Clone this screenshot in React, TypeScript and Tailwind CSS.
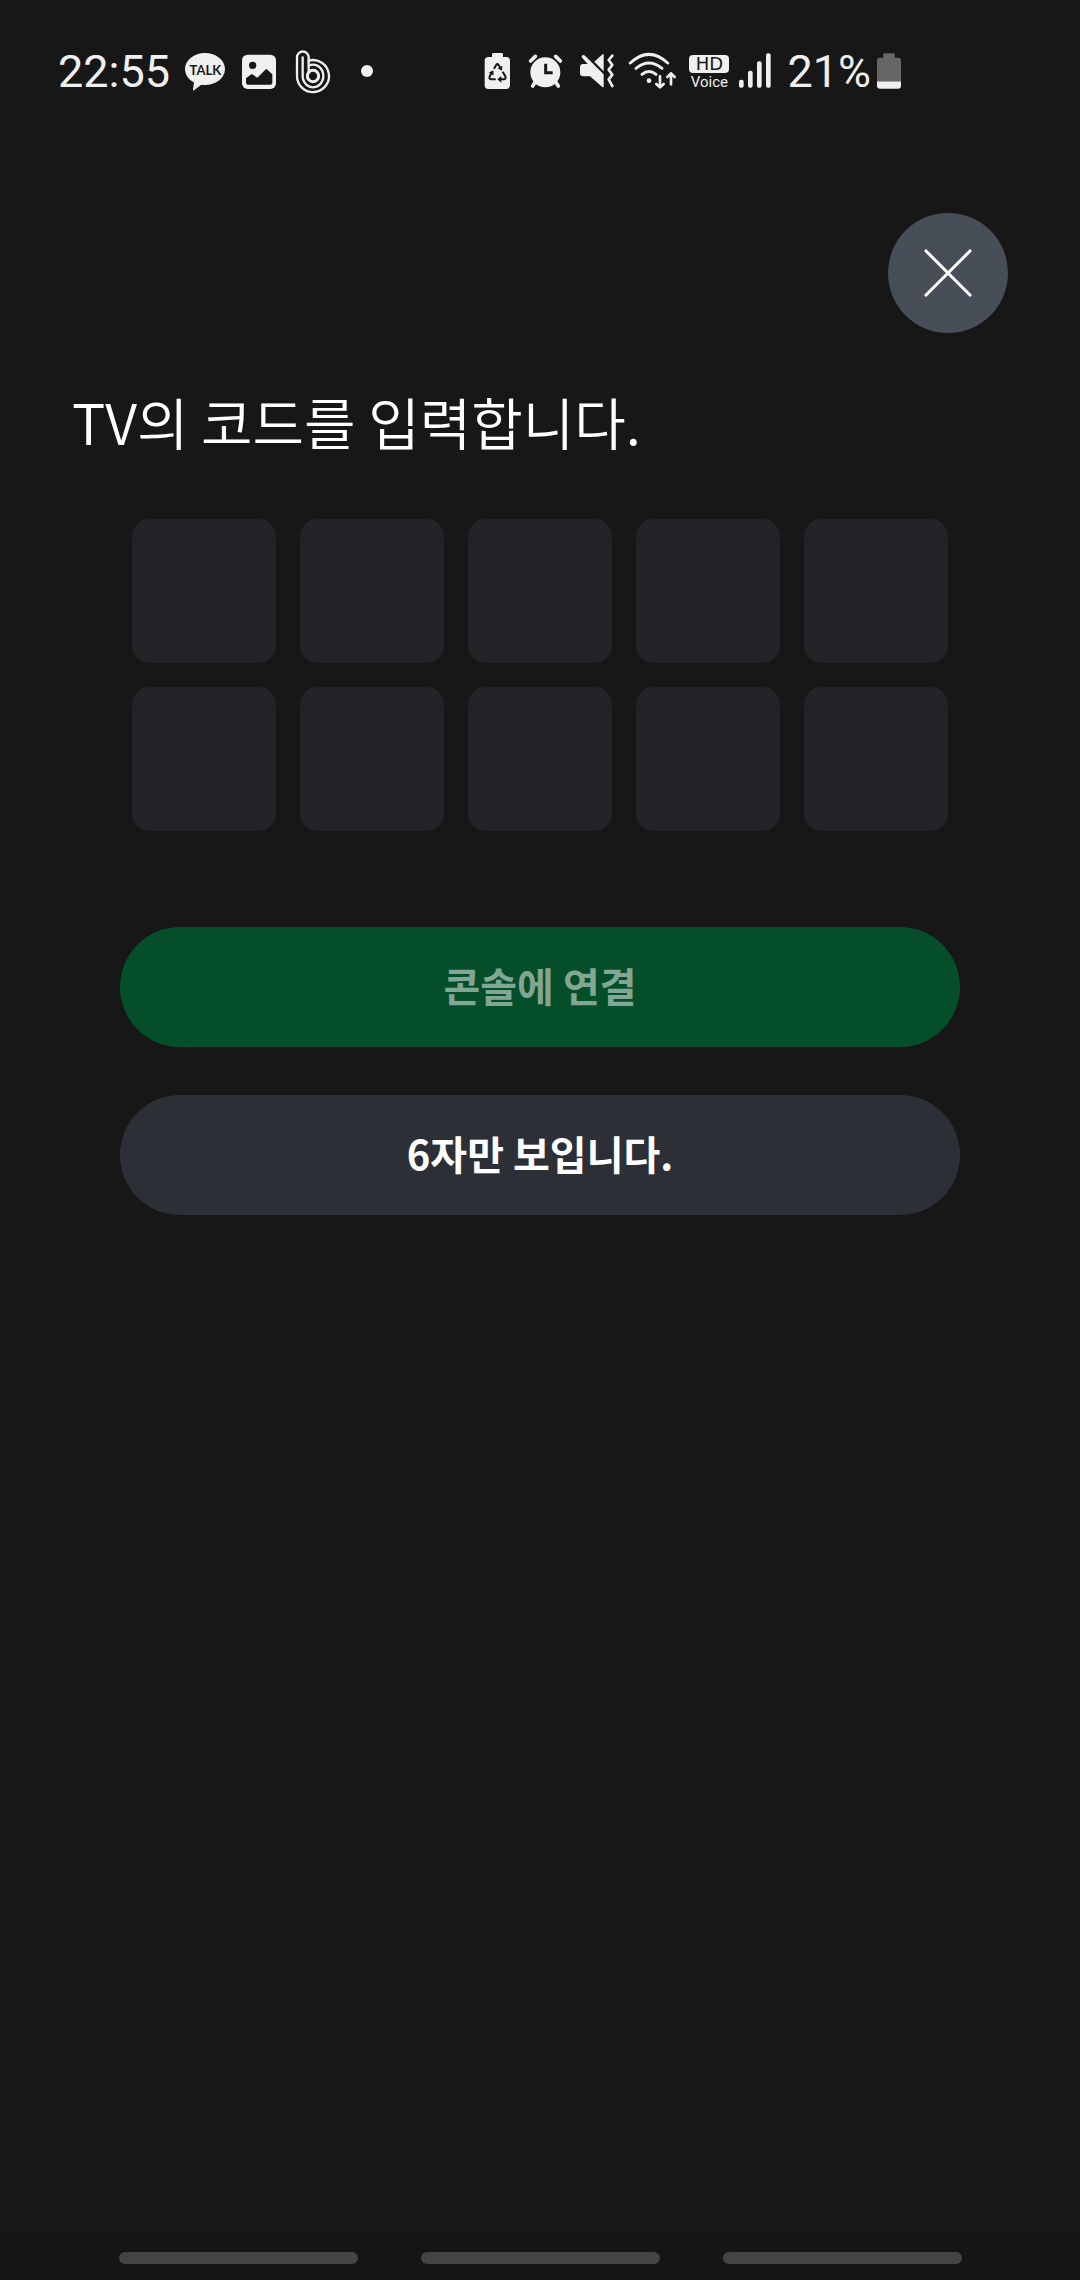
import type { ReactNode } from "react";

const INK = "#f0f0f0";
const BG = "#171717";

function StatusIcon({ box, className, children }: { box: string; className: string; children: ReactNode }) {
  return (
    <svg viewBox={box} className={`h-11 shrink-0 ${className}`} fill={INK} aria-hidden="true">
      {children}
    </svg>
  );
}

function TalkIcon() {
  return (
    <StatusIcon box="432 60 126 132" className="w-[42px]">
      <path d="M495 69c33 0 60 21 60 48s-27 48-60 48c-4 0-8 0-11-1l-22 17c-2 1-4 0-3-2l3-22c-16-8-27-23-27-40 0-27 27-48 60-48z" />
      <text x="496" y="134" textAnchor="middle" fill={BG} className="font-['Lato',sans-serif] text-[39px] font-bold">
        TALK
      </text>
    </StatusIcon>
  );
}

function PictureIcon() {
  return (
    <StatusIcon box="600 60 114 132" className="w-[38px]">
      <rect x="606" y="74" width="102" height="103" rx="17" />
      <circle cx="638" cy="106" r="11" fill={BG} />
      <path d="M618 145l17-13 17 11 27-27 18 17v25q0 6-6 6h-67q-6 0-6-6z" fill={BG} />
    </StatusIcon>
  );
}

function SpiralIcon() {
  return (
    <StatusIcon box="756 60 126 132" className="w-[42px]">
      <g fill="none" stroke={INK} strokeWidth="7">
        <path d="M771 138V82a17 17 0 0 1 35 0V92A48 48 0 1 1 771 138" />
        <path d="M788 82V138A31 34 0 1 0 806 107" strokeLinecap="round" />
        <path d="M806 91V132" />
        <circle cx="819" cy="138" r="17" strokeWidth="9" />
      </g>
    </StatusIcon>
  );
}

function DotIcon() {
  return (
    <StatusIcon box="924 60 114 132" className="w-[38px]">
      <circle cx="981" cy="123" r="18" />
    </StatusIcon>
  );
}

function BatterySaverIcon() {
  return (
    <StatusIcon box="33 60 99 132" className="w-[33px]">
      <path d="M70 69h25q4 0 4 4v8h10q11 0 11 11v74q0 11-11 11H55q-11 0-11-11V92q0-11 11-11h11v-8q0-4 4-4z" />
      <g fill="none" stroke={BG} strokeWidth="6" strokeLinejoin="round">
        <path d="M72 116l7-12q3-4 6 0l8 13" />
        <path d="M98 125l8 14q3 9-5 9H87" />
        <path d="M77 148H64q-8 0-5-9l7-12" />
      </g>
      <path d="M97 107l-1 15-13-7zM94 138v20l-12-10zM56 128l14-7 1 15z" fill={BG} />
    </StatusIcon>
  );
}

function AlarmIcon() {
  return (
    <StatusIcon box="162 60 129 132" className="w-[43px]">
      <circle cx="226" cy="127" r="45" />
      <g stroke={INK} strokeWidth="11" strokeLinecap="round">
        <path d="M182 93l14-14M271 93l-14-14" />
        <path d="M196 156l-8 12M257 156l8 12" />
      </g>
      <path d="M227 101v27h21" fill="none" stroke={BG} strokeWidth="9" />
    </StatusIcon>
  );
}

function VibrateIcon() {
  return (
    <StatusIcon box="321 60 120 132" className="w-10">
      <path d="M401 74v50l-28-29 23-21q5-4 5 0z" />
      <path d="M340 102h13l-16-18q-4-5 0-8t8 1l56 56v36q0 5-5 1l-36-31h-20q-10 0-10-9v-18q0-10 10-10z" />
      <path
        d="M427 77l-11 13 11 15-11 14 11 15-11 14 11 20"
        fill="none"
        stroke={INK}
        strokeWidth="8"
        strokeLinecap="round"
        strokeLinejoin="round"
      />
    </StatusIcon>
  );
}

function WifiIcon() {
  return (
    <StatusIcon box="471 60 156 132" className="w-[52px]">
      <g fill="none" stroke={INK} strokeWidth="9" strokeLinecap="round" strokeLinejoin="round">
        <path d="M481 99q56-52 112 0" />
        <path d="M498 115q39-32 78 0" />
        <path d="M516 133q21-17 42 0" />
        <path d="M570 139v33M559 162l11 10 11-10" strokeWidth="8" />
        <path d="M603 163v-33M592 141l11-11 11 11" strokeWidth="8" />
      </g>
      <circle cx="537" cy="152" r="7" />
    </StatusIcon>
  );
}

function HdVoiceIcon() {
  return (
    <div className="flex w-10 flex-col items-center pt-0.5 text-[#f0f0f0]">
      <span className="flex h-[18px] w-full items-center justify-center rounded-[4px] bg-[#f0f0f0] font-['DejaVu_Sans',sans-serif] text-lg leading-none text-[#171717]">
        HD
      </span>
      <span className="font-['Roboto',sans-serif] text-[15px] leading-[18px]">Voice</span>
    </div>
  );
}

function SignalIcon() {
  return (
    <StatusIcon box="207 60 96 132" className="w-8">
      <rect x="207" y="149" width="14" height="24" rx="6" />
      <rect x="234" y="122" width="14" height="51" rx="6" />
      <rect x="261" y="94" width="14" height="79" rx="6" />
      <rect x="288" y="70" width="14" height="103" rx="6" />
    </StatusIcon>
  );
}

function BatteryIcon() {
  return (
    <StatusIcon box="620 60 73 132" className="w-6">
      <path
        d="M643 69h27q4 0 4 4v10h9q10 0 10 10v63h-73V93q0-10 10-10h9V73q0-4 4-4z"
        fill="#666666"
      />
      <path d="M620 155h73v12q0 10-10 10h-53q-10 0-10-10z" />
    </StatusIcon>
  );
}

function StatusBar() {
  return (
    <header className="flex h-36 items-center justify-between pr-[179px] pl-[58px] text-[#f0f0f0]">
      <div className="flex items-center gap-3.5">
        <time className="pb-0.5 font-['Roboto',sans-serif] text-[45px] leading-none">22:55</time>
        <TalkIcon />
        <PictureIcon />
        <SpiralIcon />
        <DotIcon />
      </div>
      <div className="flex items-center gap-2.5">
        <BatterySaverIcon />
        <AlarmIcon />
        <VibrateIcon />
        <WifiIcon />
        <HdVoiceIcon />
        <SignalIcon />
        <div className="ml-1.5 flex items-center gap-1.5">
          <span className="pb-0.5 font-['Roboto',sans-serif] text-[45px] leading-none">21%</span>
          <BatteryIcon />
        </div>
      </div>
    </header>
  );
}

const CODE_LENGTH = 10;

export default function App() {
  return (
    <div className="flex min-h-screen flex-col bg-[#171717] font-['Noto_Sans_CJK_KR',sans-serif]">
      <StatusBar />
      <main className="flex flex-1 flex-col px-[72px] pt-[69px]">
        <button
          type="button"
          aria-label="닫기"
          className="flex size-[120px] items-center justify-center self-end rounded-full bg-[#484e58]"
        >
          <svg viewBox="0 0 48 48" className="size-12" stroke="#ffffff" strokeWidth="3" aria-hidden="true">
            <path d="M1 1l46 46M47 1L1 47" />
          </svg>
        </button>
        <h1 className="mt-[46px] text-[56px] leading-[84px] font-[350] text-white">TV의 코드를 입력합니다.</h1>
        <form className="mt-14 flex flex-col px-12">
          <div className="grid grid-cols-5 gap-6 px-3">
            {Array.from({ length: CODE_LENGTH }, (_, i) => (
              <input
                key={i}
                type="text"
                maxLength={1}
                aria-label={`코드 ${i + 1}`}
                className="aspect-square w-full rounded-[18px] bg-[#232428] text-center text-[56px] text-white"
              />
            ))}
          </div>
          <button
            type="submit"
            disabled
            className="mt-24 h-[120px] rounded-full bg-[#044e29] pb-1 text-[40px] font-bold text-[#81a694]"
          >
            콘솔에 연결
          </button>
          <button
            type="button"
            className="mt-12 h-[120px] rounded-full bg-[#2d2f37] pb-1 text-[40px] font-bold text-white"
          >
            6자만 보입니다.
          </button>
        </form>
      </main>
      <nav className="flex h-[46px] items-center justify-center gap-[63px] bg-[#151517] pt-0.5">
        <button type="button" aria-label="최근 앱" className="h-3 w-[239px] rounded-full bg-[#444444]" />
        <button type="button" aria-label="홈" className="h-3 w-[239px] rounded-full bg-[#444444]" />
        <button type="button" aria-label="뒤로" className="h-3 w-[239px] rounded-full bg-[#444444]" />
      </nav>
    </div>
  );
}
